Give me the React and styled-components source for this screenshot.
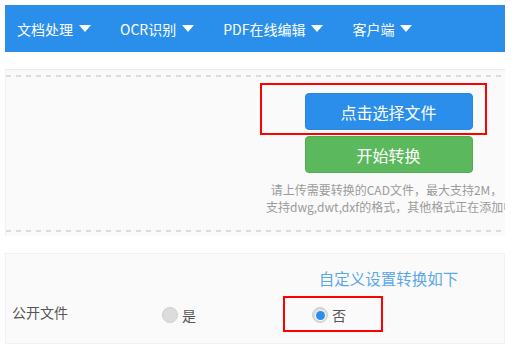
import React from 'react';
import styled, {createGlobalStyle} from 'styled-components';

const GlobalStyle = createGlobalStyle`
    body {
        margin: 0;
        background: #fff;
        font-family: "Noto Sans CJK SC", "Noto Sans", sans-serif;
    }
`;

const Page = styled.div`
    position: relative;
    width: 515px;
    height: 359px;
    padding: 5px 10px 0 5px;
    box-sizing: border-box;
    overflow: hidden;
`;

const NavBar = styled.nav`
    display: flex;
    align-items: center;
    gap: 29px;
    height: 47px;
    padding-left: 12px;
    background: #2a8fea;
`;

const NavItem = styled.div`
    display: flex;
    align-items: center;
    gap: 6px;
    color: #fff;
    font-size: 14px;
    white-space: nowrap;
`;

const Caret = styled.span`
    width: 0;
    height: 0;
    border-left: 6px solid transparent;
    border-right: 6px solid transparent;
    border-top: 7px solid #fff;
`;

const Panel = styled.section`
    margin-top: ${(p) => p.$top}px;
    background: #fafafa;
    border-top: 1px solid #ebebeb;
    border-left: 1px solid #f2f2f2;
    overflow: hidden;
`;

const Dashed = styled.div`
    height: 2px;
    background: repeating-linear-gradient(to right, #dcdcdc 0 5px, transparent 5px 10px);
`;

const UploadArea = styled.div`
    display: flex;
    flex-direction: column;
    align-items: center;
    margin-left: 260px;
    width: 241px;
    padding: 16px 0 15px;
`;

const Button = styled.button`
    width: 168px;
    height: 37px;
    margin-left: 4px;
    border: 1px solid ${(p) => (p.$green ? '#4fae4f' : '#2a85dc')};
    border-radius: 4px;
    background: ${(p) => (p.$green ? '#5cb85c' : '#2b8eea')};
    color: #fff;
    font-family: inherit;
    font-size: 16px;
    & + & {
        margin-top: 6px;
    }
`;

const Hint = styled.p`
    margin: 8px 0 0;
    width: 100%;
    color: #9a9a9a;
    font-size: 12px;
    line-height: 17px;
    text-align: center;
    white-space: nowrap;
`;

const Settings = styled.section`
    margin-top: 17px;
    height: 91px;
    box-sizing: border-box;
    padding-top: 13px;
    background: #fafafa;
    border: 1px solid #f2f2f2;
`;

const Title = styled.div`
    margin-left: 262px;
    width: 241px;
    text-align: center;
    color: #5aa8ea;
    font-size: 15.5px;
    line-height: 22px;
`;

const Row = styled.div`
    display: grid;
    grid-template-columns: 150px 150px 1fr;
    align-items: center;
    height: 34px;
    margin-top: 9px;
    padding-left: 6px;
`;

const Label = styled.span`
    color: #555;
    font-size: 14px;
    margin-bottom: 6px;
`;

const Option = styled.label`
    display: flex;
    align-items: center;
    gap: 4px;
    color: #555;
    font-size: 14px;
`;

const Radio = styled.span`
    display: flex;
    align-items: center;
    justify-content: center;
    width: 16px;
    height: 16px;
    box-sizing: border-box;
    border-radius: 50%;
    border: 1px solid #cfcfcf;
    background: #dcdcdc;
    &::after {
        content: '';
        display: ${(p) => (p.$checked ? 'block' : 'none')};
        width: 9px;
        height: 9px;
        border-radius: 50%;
        background: #2b8eea;
        box-shadow: 0 0 0 1px #f4f4f4;
    }
`;

const Marker = styled.div`
    position: absolute;
    border: 2px solid #f00;
    box-sizing: border-box;
`;

const menu = ['文档处理', 'OCR识别', 'PDF在线编辑', '客户端'];

const App = () => {
    return (
        <Page>
            <GlobalStyle/>
            <NavBar>
                {menu.map((name) =>
                    <NavItem key={name}>{name}<Caret/></NavItem>
                )}
            </NavBar>
            <Panel $top={17}>
                <div style={{height: 5}}/>
                <Dashed/>
                <UploadArea>
                    <Button>点击选择文件</Button>
                    <Button $green>开始转换</Button>
                    <Hint>
                        请上传需要转换的CAD文件，最大支持2M，<br/>
                        支持dwg,dwt,dxf的格式，其他格式正在添加中
                    </Hint>
                </UploadArea>
                <Dashed/>
                <div style={{height: 4}}/>
            </Panel>
            <Settings>
                <Title>自定义设置转换如下</Title>
                <Row>
                    <Label>公开文件</Label>
                    <Option><Radio/>是</Option>
                    <Option><Radio $checked/>否</Option>
                </Row>
            </Settings>
            <Marker style={{left: 260, top: 83, width: 227, height: 52}}/>
            <Marker style={{left: 283, top: 296, width: 100, height: 36}}/>
        </Page>
    );
};

export default App;
